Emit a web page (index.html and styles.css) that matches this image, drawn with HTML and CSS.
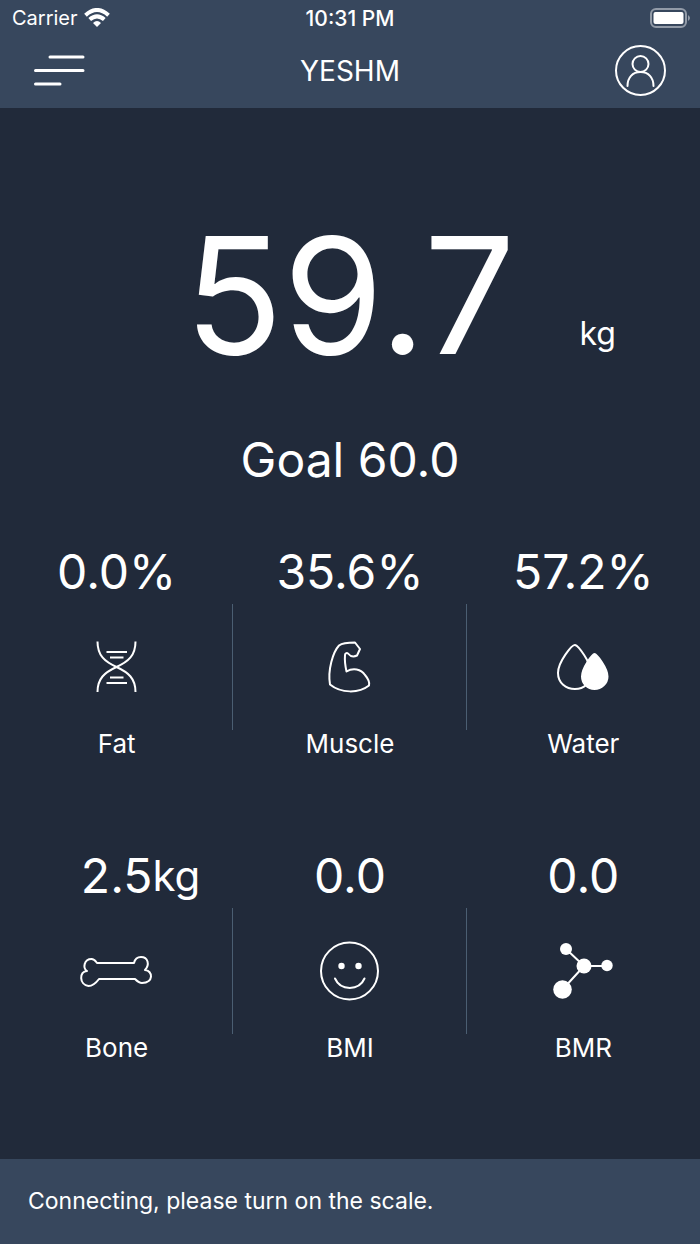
FILE: index.html
```html
<!DOCTYPE html>
<html lang="en">
<head>
    <meta charset="UTF-8">
    <meta name="viewport" content="width=device-width, initial-scale=1.0">
    <title>YESHM</title>
    <link rel="stylesheet" href="styles.css">
</head>
<body>
    <header class="header">
        <div class="status-bar">
            <div class="carrier">
                <span>Carrier</span>
                <svg width="26" height="20" viewBox="0 0 26 20" fill="none" stroke="#fff" stroke-width="4">
                    <path d="M1.5 7.2Q13-3.2 24.5 7.2"/>
                    <path d="M5.7 11.6Q13 5.2 20.3 11.6"/>
                    <path d="M9 15Q13 11.2 17 15L13 19Z" fill="#fff" stroke="none"/>
                </svg>
            </div>
            <span class="time">10:31 PM</span>
            <svg class="battery" width="41" height="20" viewBox="0 0 41 20">
                <rect x="2" y="1" width="35" height="18" rx="5" fill="none" stroke="#929ba8" stroke-width="2"/>
                <rect x="4.5" y="4" width="30" height="12" rx="2" fill="#fff"/>
                <path d="M39 7Q43 10 39 13Z" fill="#929ba8"/>
            </svg>
        </div>
        <nav class="nav-bar">
            <button class="icon-button" type="button" aria-label="Menu">
                <svg width="52" height="52" viewBox="0 0 52 52" fill="none" stroke="#fff" stroke-width="3" stroke-linecap="round">
                    <path d="M17 12H50M2.500 25.5H50M2.500 39H27"/>
                </svg>
            </button>
            <h1 class="title">YESHM</h1>
            <button class="icon-button" type="button" aria-label="Profile">
                <svg width="52" height="52" viewBox="0 0 52 52" fill="none" stroke="#fff" stroke-width="2" stroke-linecap="round">
                    <circle cx="25.5" cy="25.5" r="24.5"/>
                    <circle cx="25.5" cy="19" r="8"/>
                    <path d="M12.5 41C12.5 32.5 17.5 27 25.5 27S38.5 32.5 38.5 41"/>
                </svg>
            </button>
        </nav>
    </header>

    <main class="main">
        <div class="weight with-unit">
            <span class="number">59.7</span>
            <span class="unit">kg</span>
        </div>
        <p class="goal">Goal 60.0</p>

        <section class="stats">
            <div class="stat">
                <div class="value">0.0%</div>
                <div class="icon">
                    <svg width="60" height="60" viewBox="0 0 60 60" fill="none" stroke="#fff" stroke-width="2">
                        <path d="M11.5 4.5C11.5 18.5 18.5 24.5 30.5 30S49.5 41.5 49.5 55"/>
                        <path d="M49.5 4.5C49.5 18.5 42.5 24.5 30.5 30S11.5 41.5 11.5 55"/>
                        <path d="M20.5 15H41M24 20.5H37.500M24 40.500H37.5M20.5 46H41"/>
                    </svg>
                </div>
                <div class="label">Fat</div>
            </div>
            <div class="stat">
                <div class="value">35.6%</div>
                <div class="icon">
                    <svg width="60" height="60" viewBox="0 0 60 60" fill="none" stroke="#fff" stroke-width="2" stroke-linejoin="round">
                        <path d="M11 47.5C8.5 33 14 15 20 8.5C24 5.5 30 5.500 36 5.500L41 12L38 18.5C34 20.5 31 19 29 16.5C27.5 15.5 26 16.5 26 18C25.5 24 26.5 30 27.5 34.5C34 30.5 42 32 46 38C49 41.5 51 45 50 48.5C40 56.5 22 56.5 11 47.5Z"/>
                    </svg>
                </div>
                <div class="label">Muscle</div>
            </div>
            <div class="stat">
                <div class="value">57.2%</div>
                <div class="icon">
                    <svg width="60" height="60" viewBox="0 0 60 60" stroke="#fff" stroke-width="2" stroke-linejoin="round">
                        <path d="M22 8C19 7.5 5 25 5 36C5 46 13 52 22 52C31 52 38 46 38 36C38 25 25 8.5 22 8Z" fill="none"/>
                        <path d="M41.5 17C39.5 17 29 31 29 39.5C29 46.5 34.5 52 41.5 52S54.5 46.5 54.5 39.5C54.5 31 43.5 17 41.5 17Z" fill="#fff"/>
                    </svg>
                </div>
                <div class="label">Water</div>
            </div>
            <div class="stat">
                <div class="value with-unit">
                    <span class="number">2.5</span>
                    <span class="unit">kg</span>
                </div>
                <div class="icon">
                    <svg width="76" height="60" viewBox="0 0 76 60" fill="none" stroke="#fff" stroke-width="2" stroke-linejoin="round">
                        <path d="M19 22H56C57 17.5 59 16 63 16C70 16 72 23.5 67 29C75 29.5 76 42 64 42C61 42 59 40 57 38H21C18 42 15 45 10.5 45C1 44 1 30 9 30C4.5 27 6 18 13.5 18C16.5 18 17.5 20 19 22Z"/>
                    </svg>
                </div>
                <div class="label">Bone</div>
            </div>
            <div class="stat">
                <div class="value">0.0</div>
                <div class="icon">
                    <svg width="60" height="60" viewBox="0 0 60 60" fill="none" stroke="#fff" stroke-width="2" stroke-linecap="round">
                        <circle cx="30.5" cy="30" r="28.5"/>
                        <circle cx="22.5" cy="25" r="3.2" fill="#fff" stroke="none"/>
                        <circle cx="39.5" cy="25" r="3.2" fill="#fff" stroke="none"/>
                        <path d="M16 37.5C21.5 50 40 50 45.5 37.5"/>
                    </svg>
                </div>
                <div class="label">BMI</div>
            </div>
            <div class="stat">
                <div class="value">0.0</div>
                <div class="icon">
                    <svg width="60" height="60" viewBox="0 0 60 60" fill="#fff">
                        <path d="M13 8L31 25H54M31 25L10 48" fill="none" stroke="#fff" stroke-width="2"/>
                        <circle cx="13" cy="8" r="6"/>
                        <circle cx="31" cy="25" r="7.5"/>
                        <circle cx="54" cy="24.5" r="5.7"/>
                        <circle cx="9.5" cy="48.5" r="9.3"/>
                    </svg>
                </div>
                <div class="label">BMR</div>
            </div>
        </section>
    </main>

    <footer class="footer">Connecting, please turn on the scale.</footer>
</body>
</html>
```

FILE: styles.css
```css
* {
    box-sizing: border-box;
}
body {
    margin: 0;
    min-height: 100vh;
    display: flex;
    flex-direction: column;
    background-color: #212a3a;
    color: white;
    font-family: Inter, "Liberation Sans", sans-serif;
}
svg {
    display: block;
}
.header {
    background-color: #37475d;
}
.status-bar {
    display: grid;
    grid-template-columns: 1fr auto 1fr;
    align-items: center;
    height: 36px;
    padding: 0 10px;
    font-size: 20px;
}
.carrier {
    display: flex;
    align-items: center;
    gap: 6px;
    padding-left: 2px;
}
.time {
    font-size: 21px;
    font-weight: 500;
}
.battery {
    justify-self: end;
}
.nav-bar {
    display: flex;
    align-items: center;
    justify-content: space-between;
    height: 72px;
    padding: 0 33px 2px;
}
.icon-button {
    padding: 0;
    border: none;
    background: none;
    cursor: pointer;
}
.title {
    margin: 0;
    font-size: 28px;
    font-weight: 400;
}
.main {
    flex: 1;
    padding: 88px 0 96px;
    text-align: center;
}
/* the number stays centered, the unit hangs on its right */
.with-unit {
    display: grid;
    grid-template-columns: 1fr auto 1fr;
    align-items: center;
}
.with-unit .number {
    grid-column: 2;
}
.with-unit .unit {
    text-align: left;
}
.weight {
    font-size: 162px;
    line-height: 198px;
}
.weight .unit {
    align-self: end;
    padding: 0 0 40px 64px;
    font-size: 32px;
    line-height: 40px;
}
.goal {
    margin: 34px 0 48px;
    font-size: 48px;
    line-height: 64px;
}
.stats {
    display: grid;
    grid-template-columns: repeat(3, 1fr);
    row-gap: 88px;
}
.value {
    font-size: 48px;
    line-height: 64px;
}
.value .unit {
    font-size: 42px;
}
.icon {
    display: flex;
    align-items: center;
    justify-content: center;
    height: 126px;
    border-right: 1px solid #4b5e72;
}
.stat:nth-child(3n) .icon {
    border-right: none;
}
.label {
    padding-top: 2px;
    font-size: 26px;
    line-height: 24px;
}
.footer {
    padding: 26px 28px;
    background-color: #37475d;
    font-size: 23px;
    line-height: 33px;
}
```
